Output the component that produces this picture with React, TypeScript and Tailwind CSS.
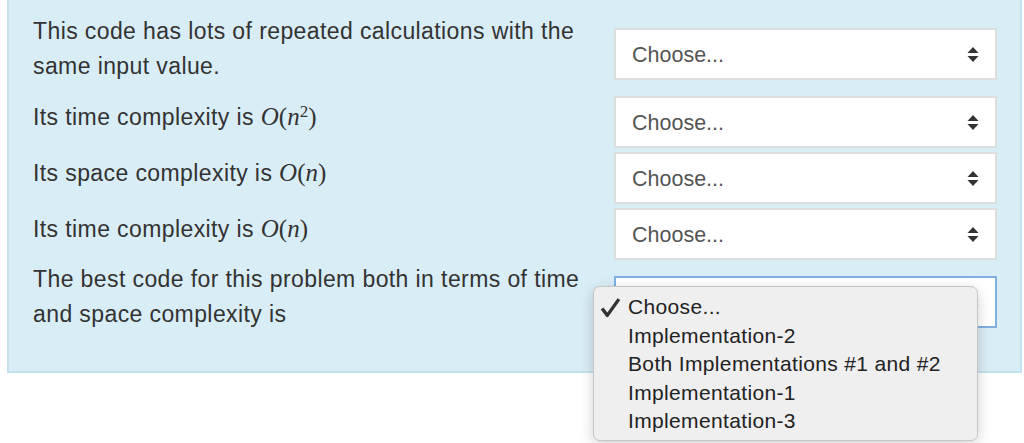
import { ReactNode } from 'react'

type TRow = {
  label: ReactNode
  focused?: boolean
  open?: boolean
}

const Math = ({ children }: { children: ReactNode }) => (
  <span className="font-['Liberation_Serif',serif] text-[25px] tracking-normal">{children}</span>
)

const Arrows = () => (
  <svg width="12" height="15" viewBox="0 0 12 15" className="shrink-0">
    <path d="M6 0 L11.5 6 L0.5 6 Z" fill="#333" />
    <path d="M6 15 L11.5 9 L0.5 9 Z" fill="#333" />
  </svg>
)

const Check = () => (
  <svg width="21" height="21" viewBox="0 0 20 20" className="shrink-0">
    <path d="M2 11 L7 17.5 L18 2" fill="none" stroke="#333" strokeWidth="3.2" strokeLinejoin="round" />
  </svg>
)

const options = ['Implementation-2', 'Both Implementations #1 and #2', 'Implementation-1', 'Implementation-3']

const Dropdown = () => (
  <div className="absolute left-[-21px] top-[10px] z-10 w-[385px] h-[155px] rounded-[7px] border border-[#c6c6c6] bg-[#efefef] shadow-[0_4px_14px_rgba(0,0,0,0.18)] pt-[6px] text-[21px] tracking-[0.35px] leading-[28.5px] text-[#222]">
    <div className="flex items-center pl-[6px] gap-[7px]">
      <Check />
      <span>Choose...</span>
    </div>
    {options.map((opt) => (
      <div key={opt} className="pl-[34px]">
        {opt}
      </div>
    ))}
  </div>
)

const Row = ({ label, focused, open }: TRow) => (
  <div className="flex items-center">
    <div className="w-[568px] pb-[10px] leading-[35px] text-[23px] tracking-[0.4px] text-[#333]">{label}</div>
    <div className="relative ml-[13px] my-[2px]">
      <div
        className={
          focused
            ? 'flex items-center justify-between w-[383px] h-[52px] bg-white border-2 border-[#7fb0e0] pl-[16px] pr-[16px]'
            : 'flex items-center justify-between w-[383px] h-[52px] bg-white border-2 border-[#dedede] pl-[16px] pr-[16px]'
        }
      >
        <span className="pt-[2px] text-[21.5px] text-[#555]">{focused ? '' : 'Choose...'}</span>
        <Arrows />
      </div>
      {open && <Dropdown />}
    </div>
  </div>
)

export default function App() {
  return (
    <div className="w-[1024px] h-[443px] bg-white font-['Liberation_Sans',Arial,sans-serif] overflow-hidden">
      <div className="ml-[7px] w-[1015px] bg-[#d9edf7] border-2 border-t-0 border-[#c4e0ef] pl-[24px] pt-[14px] pb-[29px]">
        <Row label="This code has lots of repeated calculations with the same input value." />
        <Row
          label={
            <>
              Its time complexity is{' '}
              <Math>
                <i>O</i>(<i>n</i>
                <sup className="text-[17px]">2</sup>)
              </Math>
            </>
          }
        />
        <Row
          label={
            <>
              Its space complexity is{' '}
              <Math>
                <i>O</i>(<i>n</i>)
              </Math>
            </>
          }
        />
        <Row
          label={
            <>
              Its time complexity is{' '}
              <Math>
                <i>O</i>(<i>n</i>)
              </Math>
            </>
          }
        />
        <Row label="The best code for this problem both in terms of time and space complexity is" focused open />
      </div>
    </div>
  )
}
